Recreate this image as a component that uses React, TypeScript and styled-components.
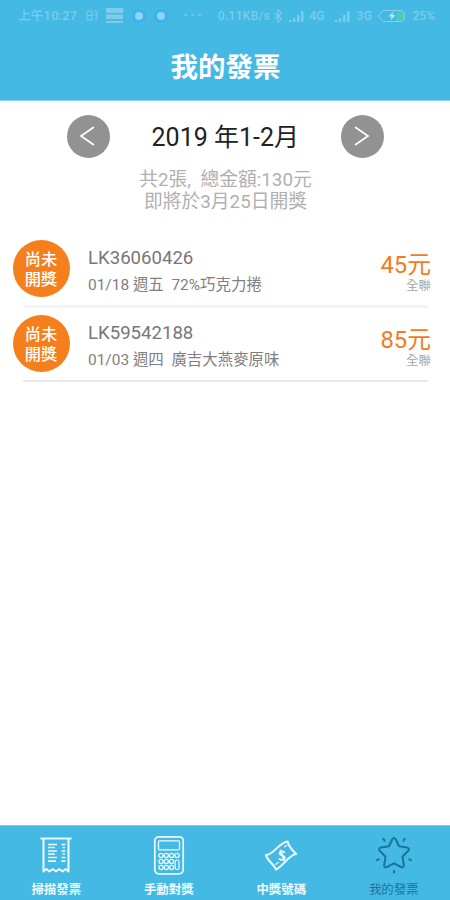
import React from "react";
import styled, { createGlobalStyle } from "styled-components";

const GlobalStyle = createGlobalStyle`
  * { box-sizing: border-box; }
  body {
    margin: 0;
    background: #fff;
    font-family: Roboto, "Noto Sans CJK TC", sans-serif;
  }
`;

const Screen = styled.div`
  width: 450px;
  height: 900px;
  display: flex;
  flex-direction: column;
  overflow: hidden;
  background: #fff;
`;

const Header = styled.header`
  height: 101px;
  flex: none;
  background: #44b9e4;
  border-bottom: 1px solid #8fd0ec;
`;

const StatusBar = styled.div`
  height: 32px;
  padding: 0 15px 0 18px;
  display: flex;
  align-items: center;
  justify-content: space-between;
  color: #7bcced;
  font-weight: 500;
  line-height: 32px;
  white-space: nowrap;
`;

const StatusGroup = styled.div<{ $gap: number; $before?: number }>`
  display: flex;
  align-items: center;
  gap: ${(p) => p.$gap}px;
  margin-left: ${(p) => p.$before ?? 0}px;
`;

const StatusText = styled.span<{ $size?: number; $spacing?: number }>`
  font-size: ${(p) => p.$size ?? 12}px;
  letter-spacing: ${(p) => p.$spacing ?? 0}px;
`;

const Notice = styled.span`
  width: 14px;
  height: 14px;
  border-radius: 50%;
  border: 3px solid #3fb1e8;
  background: #8bd5f5;
`;

const Title = styled.h1`
  margin: 16px 0 0;
  padding-left: 1px;
  text-align: center;
  color: #fff;
  font-size: 27.5px;
  line-height: 40px;
  font-weight: 700;
`;

const Period = styled.section`
  height: 70px;
  padding: 0 66px 0 66.5px;
  flex: none;
  display: flex;
  align-items: center;
  justify-content: space-between;
`;

const RoundButton = styled.button`
  width: 43px;
  height: 43px;
  padding: 0;
  border: 0;
  border-radius: 50%;
  background: #929292;
  display: grid;
  place-items: center;
`;

const PeriodName = styled.div`
  color: #222;
  font-size: 25px;
  line-height: 36px;
  padding-top: 3px;
  white-space: nowrap;
`;

const Summary = styled.p`
  margin: -2px 0 0;
  padding-left: 1px;
  flex: none;
  text-align: center;
  color: #b0b0b0;
  font-size: 18.8px;
  line-height: 22px;
  white-space: pre;
`;

const List = styled.ul`
  margin: 19px 0 0;
  padding: 0;
  list-style: none;
  flex: 1;
`;

const Row = styled.li`
  height: 75px;
  padding: 0 19px 0 12.5px;
  display: flex;
  align-items: flex-start;
`;

const Badge = styled.div`
  width: 57px;
  height: 57px;
  margin-top: 8px;
  padding-top: 10px;
  flex: none;
  border-radius: 50%;
  background: #f57f1c;
  color: #fff;
  font-size: 16.2px;
  line-height: 20px;
  font-weight: 500;
  text-align: center;
`;

const Details = styled.div`
  flex: 1;
  padding: 12px 0 0 18.5px;
  white-space: pre;
`;

const InvoiceNumber = styled.div`
  color: #777;
  font-size: 18.6px;
  line-height: 28px;
`;

const Purchase = styled.div`
  color: #808080;
  font-size: 15.45px;
  line-height: 24px;
  margin-top: 1px;
`;

const Payment = styled.div`
  padding-top: 21px;
  text-align: right;
`;

const Amount = styled.div`
  color: #f37b1c;
  font-size: 23.8px;
  line-height: 24px;
`;

const Store = styled.div`
  color: #a6a6a6;
  font-size: 12.4px;
  line-height: 18px;
`;

const Divider = styled.li<{ $thick?: boolean }>`
  height: ${(p) => (p.$thick ? 3 : 2)}px;
  margin: ${(p) => (p.$thick ? "-2px 22px -1px 24px" : "-2px 22px 0 23px")};
  background: ${(p) => (p.$thick ? "#f4f4f4" : "#e8e8e8")};
`;

const TabBar = styled.nav`
  height: 75px;
  flex: none;
  display: grid;
  grid-template-columns: repeat(4, 1fr);
  background: #44b9e4;
  border-top: 1px solid #82cae8;
`;

const Tab = styled.div<{ $active?: boolean }>`
  display: flex;
  flex-direction: column;
  align-items: center;
  padding-top: 9px;
  color: ${(p) => (p.$active ? "#18759c" : "#eefaff")};
  font-size: 12.4px;
  line-height: 18px;
  font-weight: ${(p) => (p.$active ? 400 : 700)};

  svg { display: block; margin-bottom: 6px; }
`;

const Chevron = ({ right }: { right?: boolean }) => (
  <svg width="18" height="22" viewBox="0 0 18 22" fill="none" stroke="#fff" strokeWidth="1.7">
    <path d={right ? "M2 2 15 11 2 20" : "M15 2 2 11 15 20"} />
  </svg>
);

const ReceiptIcon = () => (
  <svg width="40" height="40" viewBox="0 0 40 40" fill="none" stroke="currentColor">
    <path d="M4.500 3.500h31M7.500 3.500v33l3-2.500 3 2.500 3.200-2.500 3.300 2.500 3.300-2.500 3.200 2.500 3-2.500 3 2.500v-33" strokeWidth="2" strokeLinejoin="round" />
    <path d="M12 9.500h9M12 12.500h7M12 16h9M12 19h7M12 22.500h9M12 26.200h8M25.500 9.500h4M26.500 12.500h2.500M25.500 16h4M26.500 19h2.500M25.500 22.500h4M25.500 26.200h4" strokeWidth="1.700" />
  </svg>
);

const keys = [
  [12, 20.5], [17.3, 20.5], [22.6, 20.5], [28, 20.5],
  [12, 26.5], [17.3, 26.5], [22.6, 26.5],
  [12, 32.5], [17.3, 32.5], [22.6, 32.5],
];

const CalculatorIcon = () => (
  <svg width="40" height="40" viewBox="0 0 40 40" fill="none" stroke="currentColor">
    <rect x="5.8" y="1.8" width="28.4" height="37" rx="4" strokeWidth="1.7" />
    <rect x="9.5" y="5.8" width="21" height="9" rx="1" strokeWidth="1.3" />
    {keys.map(([x, y]) => (
      <circle key={`${x}-${y}`} cx={x} cy={y} r="2.1" strokeWidth="1.3" />
    ))}
    <rect x="26.2" y="25" width="3.8" height="9.5" rx="1.8" strokeWidth="1.2" />
  </svg>
);

const MoneyIcon = () => (
  <svg width="40" height="40" viewBox="0 0 40 40" fill="none" stroke="currentColor" strokeLinejoin="round" strokeLinecap="round">
    <path d="M5 20C13 19.500 17.500 8 26.500 6.500c1.200 4.500 5 9 8.700 12.500C28 19.500 23 30.500 15 34.500 13.500 30 6.500 26 5 20Z" strokeWidth="2" />
    <path d="M23.200 17.300c-1.700-1.700-4.700-.5-4.700 1.200 0 2.200 5 1.500 5.300 4 .2 2.200-3.600 3.300-5.300 1.400M19.500 15.500l3.600 9.800" strokeWidth="1.800" />
    <path d="M23.500 11.800l2.500-1.500M14.500 29.500l3-2.200" strokeWidth="1.200" />
  </svg>
);

const StarIcon = () => (
  <svg width="40" height="40" viewBox="0 0 40 40" fill="none" stroke="currentColor" strokeLinejoin="round" strokeLinecap="round">
    <path d="M18.300 4.300Q20 1.500 21.700 4.300L25 11.200 33.200 12.600Q36.200 13.300 34.200 15.800L28.500 21.800 29.800 30Q30 33.300 27 32L20 28.300 13 32Q10 33.300 10.200 30L11.500 21.800 5.800 15.800Q3.800 13.300 6.800 12.600L15 11.200Z" strokeWidth="2" />
    <path d="M9.300 3.800l1.200 1.800M30.700 3.800l-1.200 1.800M3 25.200l1.800-.8M37 25.200l-1.800-.8M20 36v1.500" strokeWidth="2" />
  </svg>
);

const SealIcon = () => (
  <svg width="12" height="12" viewBox="0 0 12 12" fill="none" stroke="currentColor">
    <path d="M1 1h5v9H1zM1 5.500h5M8 1h3v8H9M8 5h3" />
  </svg>
);

const CardsIcon = () => (
  <svg width="17" height="16" viewBox="0 0 17 16" fill="currentColor">
    <path d="M0 0h17v5H0zM0 6.500h17v4.500H0zM0 13h17v2H0z" />
  </svg>
);

const BluetoothIcon = () => (
  <svg width="10" height="14" viewBox="0 0 10 14" fill="none" stroke="currentColor" strokeWidth="1.200">
    <path d="M1.500 4l7 6L5 13V1l3.500 3-7 6" />
  </svg>
);

const SignalIcon = () => (
  <svg width="16" height="12" viewBox="0 0 16 12" fill="currentColor">
    <path d="M0 10h2.500v2H0zM4 8h2.500v4H4zM8 5h2.500v7H8zM12 1h2.500v11H12z" />
  </svg>
);

const BatteryIcon = () => (
  <svg width="29" height="14" viewBox="0 0 29 14" fill="none">
    <path d="M19 2h4a4 4 0 0 1 4 5 4 4 0 0 1-4 5h-5z" fill="#55c8be" />
    <path d="M6 1.500h17c5 0 5 11 0 11H6C3 12.500 4 9 1 8.500v-3C4 5 3 1.500 6 1.500Z" stroke="#83cfee" />
    <path d="M15.500 2.500l-5 5h3l-1 4 5-5.500h-3z" fill="#b9eafa" />
  </svg>
);

const invoices = [
  { number: "LK36060426", date: "01/18 週五", item: "72%巧克力捲", amount: "45元", store: "全聯" },
  { number: "LK59542188", date: "01/03 週四", item: "廣吉大燕麥原味", amount: "85元", store: "全聯" },
];

export default function App() {
  return (
    <>
      <GlobalStyle />
      <Screen>
        <Header>
          <StatusBar>
            <StatusGroup $gap={8.5}>
              <StatusText $size={12.5} $spacing={0.35}>上午10:27</StatusText>
              <SealIcon />
              <CardsIcon />
              <Notice />
              <Notice />
              <StatusText $size={16} $spacing={2.5}>&nbsp;···</StatusText>
            </StatusGroup>
            <StatusGroup $gap={5.5}>
              <StatusGroup $gap={3}>
                <StatusText $size={12} $spacing={0.3}>0.11KB/s</StatusText>
                <BluetoothIcon />
              </StatusGroup>
              <StatusGroup $gap={5}>
                <SignalIcon />
                <StatusText>4G</StatusText>
              </StatusGroup>
              <StatusGroup $gap={5.5} $before={5}>
                <SignalIcon />
                <StatusText $spacing={0.5}>3G</StatusText>
              </StatusGroup>
              <BatteryIcon />
              <StatusText>25%</StatusText>
            </StatusGroup>
          </StatusBar>
          <Title>我的發票</Title>
        </Header>
        <Period>
          <RoundButton aria-label="上一期"><Chevron /></RoundButton>
          <PeriodName>2019 年1-2月</PeriodName>
          <RoundButton aria-label="下一期"><Chevron right /></RoundButton>
        </Period>
        <Summary>{"共2張,  總金額:130元\n即將於3月25日開獎"}</Summary>
        <List>
          {invoices.map((invoice, index) => (
            <React.Fragment key={invoice.number}>
              <Row>
                <Badge>尚未<br />開獎</Badge>
                <Details>
                  <InvoiceNumber>{invoice.number}</InvoiceNumber>
                  <Purchase>{`${invoice.date}  ${invoice.item}`}</Purchase>
                </Details>
                <Payment>
                  <Amount>{invoice.amount}</Amount>
                  <Store>{invoice.store}</Store>
                </Payment>
              </Row>
              <Divider $thick={index === 0} />
            </React.Fragment>
          ))}
        </List>
        <TabBar>
          <Tab><ReceiptIcon />掃描發票</Tab>
          <Tab><CalculatorIcon />手動對獎</Tab>
          <Tab><MoneyIcon />中獎號碼</Tab>
          <Tab $active><StarIcon />我的發票</Tab>
        </TabBar>
      </Screen>
    </>
  );
}
